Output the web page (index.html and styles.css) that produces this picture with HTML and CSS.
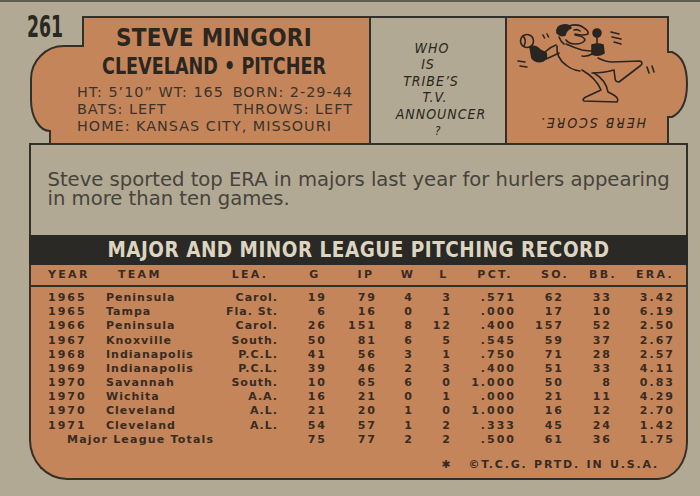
FILE: index.html
```html
<!DOCTYPE html>
<html lang="en">
<head>
<meta charset="utf-8">
<title>Steve Mingori card back</title>
<link rel="stylesheet" href="styles.css">
</head>
<body>
<div class="page">
  <div class="card">
    <div class="head">
      <div class="lp">
        <svg class="shape" width="342" height="127" viewBox="29 16 342 127">
          <path d="M83 17 H370 V146 H50 V131 C39.5 131 31 117 31 100 V79 C31 60.8 45.8 46 64 46 H83 Z" fill="#c5855a" stroke="#33302a" stroke-width="2"/>
        </svg>
        <div class="lp-body">
          <div class="lp-top">
            <div class="num">261</div>
            <div class="name">STEVE MINGORI</div>
          </div>
          <div class="team">CLEVELAND • PITCHER</div>
          <div class="info">
            <div class="info-line"><span>HT: 5’10” WT: 165</span><span>BORN: 2-29-44</span></div>
            <div class="info-line"><span>BATS: LEFT</span><span>THROWS: LEFT</span></div>
            <div class="info-line"><span>HOME: KANSAS CITY, MISSOURI</span></div>
          </div>
        </div>
      </div>
      <div class="mid">
        <div class="hw hw-a">WHO</div>
        <div class="hw hw-b">IS</div>
        <div class="hw hw-c">TRIBE’S</div>
        <div class="hw hw-d">T.V.</div>
        <div class="hw hw-e">ANNOUNCER</div>
        <div class="q">?</div>
      </div>
      <div class="rp">
        <svg class="shape" width="183" height="127" viewBox="505 16 183 127">
          <path d="M506 17 H668 V52 H672 C682 56 687 68 687 84 C687 100 682 112 672 117 H668 V146 H506 Z" fill="#c5855a" stroke="#33302a" stroke-width="2"/>
        </svg>
        <div class="rp-body">
          <svg class="toon" width="145" height="84" viewBox="515 22 145 84">
            <g fill="none" stroke="#2a2520" stroke-width="1.6" stroke-linecap="round" stroke-linejoin="round">
              <circle cx="527" cy="41" r="6.5"/>
              <path d="M523 36 Q527 40 524 46"/>
              <path d="M530 47 Q536 45 540 50 L546 53 Q548 58 543 61 Q536 63 532 58 Z" fill="#2a2520"/>
              <path d="M545 52 Q550 47 556 45"/>
              <path d="M546 59 Q553 56 559 53"/>
              <path d="M557 33 Q556 26 563 25 Q569 24 571 28 Q566 30 565 35 Q561 37 557 33 Z" fill="#2a2520"/>
              <path d="M569 26 Q578 23 584 28 Q589 31 588 34 Q583 36 575 34"/>
              <path d="M574 30 Q578 29 580 31"/>
              <path d="M575 35 Q584 36 585 40 Q583 44 575 44 Q569 44 566 40"/>
              <path d="M559 37 Q561 42 564 44"/>
              <path d="M557 46 Q556 58 566 65 Q572 70 580 71"/>
              <path d="M566 44 Q575 48 582 50 Q588 51 592 51"/>
              <circle cx="597" cy="33" r="4" fill="#2a2520"/>
              <path d="M597 37 V45"/>
              <path d="M592 45 Q598 43 603 45 L604 53 Q598 57 592 54 Z" fill="#2a2520"/>
              <path d="M592 54 Q587 57 582 56"/>
              <path d="M598 58 Q606 62 612 62 L640 61 Q644 63 640 66 L619 82 Q615 82 615 78 L614 70 Q604 73 592 73"/>
              <path d="M582 70 Q596 78 601 90 L588 96 Q581 99 584 101 L617 102 Q620 98 612 94 L608 92 Q606 80 594 73"/>
              <path d="M543 35 l1.5 3 M547 34 l1.5 3"/>
              <path d="M611 32 l8 2 M612 37 l9 2 M614 42 l7 2"/>
              <path d="M647 67 l2 6 M652 66 l2 6"/>
              <path d="M518 61 l7 1 M520 66 l7 1"/>
            </g>
          </svg>
          <div class="caption">HERB SCORE.</div>
        </div>
      </div>
    </div>

    <div class="bio">
      <p>Steve sported top ERA in majors last year for hurlers appearing in more than ten games.</p>
    </div>

    <div class="band">MAJOR AND MINOR LEAGUE PITCHING RECORD</div>

    <div class="stats">
      <div class="thead">
        <div class="h-year">YEAR</div>
        <div class="h-team">TEAM</div>
        <div>LEA.</div>
        <div>G</div>
        <div>IP</div>
        <div>W</div>
        <div>L</div>
        <div>PCT.</div>
        <div>SO.</div>
        <div>BB.</div>
        <div>ERA.</div>
      </div>
      <div class="rows">
        <div class="row"><span class="y">1965</span><span class="t">Peninsula</span><span class="l">Carol.</span><span>19</span><span>79</span><span>4</span><span>3</span><span>.571</span><span>62</span><span>33</span><span>3.42</span></div>
        <div class="row"><span class="y">1965</span><span class="t">Tampa</span><span class="l">Fla. St.</span><span>6</span><span>16</span><span>0</span><span>1</span><span>.000</span><span>17</span><span>10</span><span>6.19</span></div>
        <div class="row"><span class="y">1966</span><span class="t">Peninsula</span><span class="l">Carol.</span><span>26</span><span>151</span><span>8</span><span>12</span><span>.400</span><span>157</span><span>52</span><span>2.50</span></div>
        <div class="row"><span class="y">1967</span><span class="t">Knoxville</span><span class="l">South.</span><span>50</span><span>81</span><span>6</span><span>5</span><span>.545</span><span>59</span><span>37</span><span>2.67</span></div>
        <div class="row"><span class="y">1968</span><span class="t">Indianapolis</span><span class="l">P.C.L.</span><span>41</span><span>56</span><span>3</span><span>1</span><span>.750</span><span>71</span><span>28</span><span>2.57</span></div>
        <div class="row"><span class="y">1969</span><span class="t">Indianapolis</span><span class="l">P.C.L.</span><span>39</span><span>46</span><span>2</span><span>3</span><span>.400</span><span>51</span><span>33</span><span>4.11</span></div>
        <div class="row"><span class="y">1970</span><span class="t">Savannah</span><span class="l">South.</span><span>10</span><span>65</span><span>6</span><span>0</span><span>1.000</span><span>50</span><span>8</span><span>0.83</span></div>
        <div class="row"><span class="y">1970</span><span class="t">Wichita</span><span class="l">A.A.</span><span>16</span><span>21</span><span>0</span><span>1</span><span>.000</span><span>21</span><span>11</span><span>4.29</span></div>
        <div class="row"><span class="y">1970</span><span class="t">Cleveland</span><span class="l">A.L.</span><span>21</span><span>20</span><span>1</span><span>0</span><span>1.000</span><span>16</span><span>12</span><span>2.70</span></div>
        <div class="row"><span class="y">1971</span><span class="t">Cleveland</span><span class="l">A.L.</span><span>54</span><span>57</span><span>1</span><span>2</span><span>.333</span><span>45</span><span>24</span><span>1.42</span></div>
        <div class="row"><span class="tot">Major League Totals</span><span>75</span><span>77</span><span>2</span><span>2</span><span>.500</span><span>61</span><span>36</span><span>1.75</span></div>
      </div>
      <div class="foot"><span class="star">✱</span><span>©T.C.G. PRTD. IN U.S.A.</span></div>
    </div>
  </div>
</div>
</body>
</html>
```

FILE: styles.css
```css
* {
  box-sizing: border-box;
  margin: 0;
  padding: 0;
}

html,
body {
  width: 700px;
  height: 496px;
  overflow: hidden;
}

body {
  background: #b1a994;
  color: #2e2921;
  font-family: "DejaVu Sans", sans-serif;
}

.page {
  height: 496px;
  border-top: 2px solid #5e5d4f;
}

.card {
  width: 659px;
  margin-left: 29px;
  padding-top: 14px;
}

/* ---------- top panels ---------- */
.head {
  display: flex;
  height: 127px;
}

.lp {
  width: 342px;
  display: grid;
}

.rp {
  width: 183px;
  display: grid;
}

.lp > *,
.rp > * {
  grid-area: 1 / 1;
}

.shape {
  display: block;
}

.lp-body,
.rp-body {
  display: flex;
  flex-direction: column;
}

.lp-top {
  display: flex;
  align-items: flex-start;
}

.num {
  width: 54px;
  margin-left: -2px;
  font-family: "DejaVu Sans Condensed", "DejaVu Sans", sans-serif;
  font-stretch: condensed;
  font-weight: bold;
  font-size: 30px;
  line-height: 22px;
  color: #2b2822;
  transform: scaleX(0.64);
  transform-origin: left center;
}

.name {
  flex: 1;
  margin-top: 10.5px;
  padding-right: 24px;
  text-align: center;
  font-family: "DejaVu Sans Condensed", "DejaVu Sans", sans-serif;
  font-stretch: condensed;
  font-weight: bold;
  font-size: 24px;
  line-height: 22px;
  letter-spacing: 0.3px;
  color: #2b2620;
}

.team {
  margin: 6.5px 1px 0 29px;
  text-align: center;
  font-family: "DejaVu Sans Condensed", "DejaVu Sans", sans-serif;
  font-stretch: condensed;
  font-weight: bold;
  font-size: 23px;
  line-height: 22px;
  color: #2b2620;
  transform: scaleX(0.85);
}

.info {
  width: 276px;
  margin: 6.5px 0 0 48px;
  font-size: 14.4px;
  line-height: 17px;
  letter-spacing: 1px;
  color: #3a332a;
}

.info-line {
  display: flex;
  justify-content: space-between;
}

.mid {
  width: 134px;
  border-top: 2px solid #33302a;
  padding-top: 22px;
  text-align: center;
  font-family: "DejaVu Sans Condensed", "DejaVu Sans", sans-serif;
  font-stretch: condensed;
  font-style: oblique;
  font-size: 14px;
  letter-spacing: 1px;
  color: #2a2620;
}

.hw {
  line-height: 16.4px;
}

.hw-a { padding-right: 12px; }
.hw-b { padding-right: 20px; }
.hw-c { padding-right: 14px; }
.hw-d { padding-right: 6px; }
.hw-e { padding-left: 6px; }

.q {
  margin-top: 1.9px;
  font-size: 12px;
  line-height: 14px;
}

.toon {
  display: block;
  width: 145px;
  height: 84px;
  margin: 6px 0 0 10px;
}

.caption {
  width: 151px;
  margin: 9.8px 0 0 12px;
  text-align: center;
  font-family: "DejaVu Sans Condensed", "DejaVu Sans", sans-serif;
  font-stretch: condensed;
  font-style: oblique;
  font-size: 14px;
  line-height: 14px;
  letter-spacing: 1.9px;
  color: #2a2620;
  transform: rotate(180deg);
}

/* ---------- bio ---------- */
.bio {
  height: 92px;
  border: 2px solid #33302a;
  border-bottom: 0;
  padding: 26px 6px 0 16.5px;
  font-size: 19.6px;
  line-height: 18.5px;
  color: #46433b;
}

/* ---------- band ---------- */
.band {
  height: 30px;
  background: #2a2926;
  color: #ddd5c0;
  text-align: center;
  font-family: "DejaVu Sans Condensed", "DejaVu Sans", sans-serif;
  font-stretch: condensed;
  font-weight: bold;
  font-size: 20.5px;
  line-height: 30px;
  letter-spacing: 0.5px;
}

/* ---------- stats ---------- */
.stats {
  background: #c5855a;
  border: 2px solid #33302a;
  border-top: 0;
  border-radius: 0 0 30px 38px / 0 0 38px 40px;
  color: #382b21;
  font-weight: bold;
  font-size: 11px;
}

.thead {
  display: grid;
  grid-template-columns: 69px 124px 52px 78px 24px 60px 12px 90px 30px 66px 38px 12px;
  height: 22px;
  border-bottom: 2px solid #33302a;
  line-height: 20px;
  letter-spacing: 2.3px;
  text-align: center;
}

.thead .h-year {
  text-align: left;
  padding-left: 17px;
}

.thead .h-team {
  text-align: left;
  padding-left: 18px;
}

.rows {
  padding-top: 4.1px;
}

.row {
  display: grid;
  grid-template-columns: 69px 121px 57px 49px 50px 37px 38px 64px 48px 48px 63px 11px;
  line-height: 14.17px;
  letter-spacing: 2px;
  text-align: right;
  white-space: nowrap;
}

.row .y {
  text-align: left;
  padding-left: 17px;
}

.row .t {
  text-align: left;
  padding-left: 6px;
  letter-spacing: 1px;
}

.row .l {
  letter-spacing: 1px;
}

.row .tot {
  grid-column: 1 / 4;
  text-align: left;
  padding-left: 36px;
  letter-spacing: 1.2px;
}

.foot {
  display: flex;
  justify-content: flex-end;
  margin-top: 11px;
  padding: 0 27px 6px 0;
  line-height: 14px;
  letter-spacing: 1.8px;
  word-spacing: 1px;
}

.star {
  margin-right: 16px;
}
```
